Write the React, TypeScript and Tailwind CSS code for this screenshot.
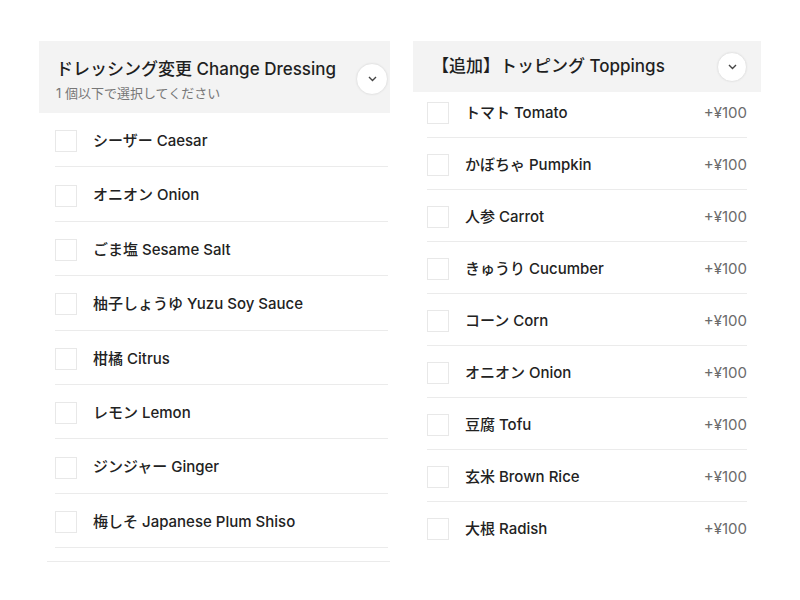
const dressings = [
  "シーザー Caesar",
  "オニオン Onion",
  "ごま塩 Sesame Salt",
  "柚子しょうゆ Yuzu Soy Sauce",
  "柑橘 Citrus",
  "レモン Lemon",
  "ジンジャー Ginger",
  "梅しそ Japanese Plum Shiso",
];

const toppings = [
  "トマト Tomato",
  "かぼちゃ Pumpkin",
  "人参 Carrot",
  "きゅうり Cucumber",
  "コーン Corn",
  "オニオン Onion",
  "豆腐 Tofu",
  "玄米 Brown Rice",
  "大根 Radish",
];

const font = "font-['Inter','Noto_Sans_CJK_JP',sans-serif]";

function Chevron({ size }: { size: string }) {
  return (
    <div
      className={`${size} shrink-0 flex items-center justify-center rounded-full bg-white border border-[#e6e6e6] shadow-[0_0_2px_rgba(0,0,0,0.06)]`}
    >
      <svg width="9" height="6" viewBox="0 0 9 6" fill="none">
        <path d="M1 1l3.5 3.5L8 1" stroke="#444" strokeWidth="1.4" />
      </svg>
    </div>
  );
}

function Box() {
  return <div className="w-[22px] h-[22px] shrink-0 border border-[#e8e8e8] bg-white" />;
}

function App() {
  return (
    <div className={`w-[800px] h-[600px] bg-white flex pt-[41px] ${font}`}>
      {/* left panel */}
      <div className="ml-[39px] w-[351px] flex flex-col">
        <div className="h-[72px] bg-[#f3f3f3] flex pl-[17px] pr-[2px]">
          <div className="flex-1 pt-[17px]">
            <div className="text-[17px] leading-[22px] font-medium text-[#1f1f1f]">
              ドレッシング変更 Change Dressing
            </div>
            <div className="text-[13px] leading-[18px] text-[#777] mt-[4px]">
              1 個以下で選択してください
            </div>
          </div>
          <div className="self-center mt-[4px]">
            <Chevron size="w-[32px] h-[32px]" />
          </div>
        </div>
        <div className="flex flex-col px-[16px] pr-[2px]">
          {dressings.map((d) => (
            <div
              key={d}
              className="h-[54.4px] pt-[3px] flex items-center gap-[16px] border-b border-[#ebebeb]"
            >
              <Box />
              <span className="text-[15px] font-medium text-[#222]">{d}</span>
            </div>
          ))}
        </div>
        <div className="mt-[13px] ml-[8px] border-t border-[#ebebeb]" />
      </div>

      {/* right panel */}
      <div className="ml-[23px] w-[348px] h-[500px] overflow-hidden flex flex-col">
        <div className="relative z-10 h-[51px] shrink-0 bg-[#f3f3f3] flex items-center pl-[19px] pr-[14px]">
          <div className="flex-1 text-[17px] font-medium text-[#1f1f1f]">
            【追加】トッピング Toppings
          </div>
          <Chevron size="w-[30px] h-[30px]" />
        </div>
        <div className="-mt-[6px] flex flex-col pl-[14px] pr-[14px]">
          {toppings.map((t) => (
            <div
              key={t}
              className="h-[52px] shrink-0 pt-[3px] flex items-center gap-[16px] border-b border-[#ebebeb]"
            >
              <Box />
              <span className="flex-1 text-[15px] font-medium text-[#222]">{t}</span>
              <span className="text-[15px] text-[#6b6b6b]">+¥100</span>
            </div>
          ))}
        </div>
      </div>
    </div>
  );
}

export default App;
